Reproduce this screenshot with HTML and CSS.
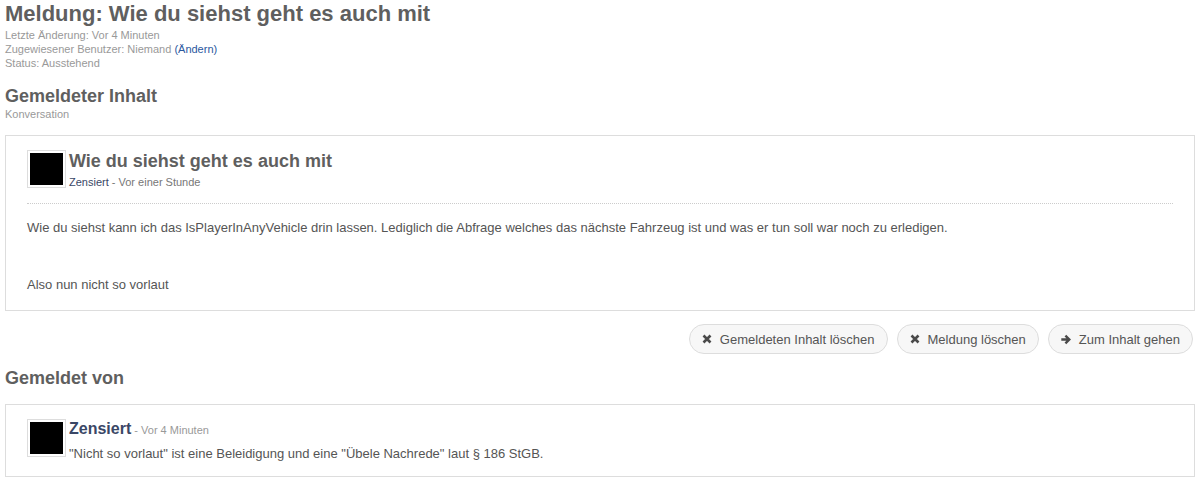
FILE: index.html
```html
<!DOCTYPE html>
<html lang="de">
<head>
<meta charset="utf-8">
<title>Meldung</title>
<link rel="stylesheet" href="styles.css">
</head>
<body>
<div class="page">
  <header class="report-head">
    <h1 class="title">Meldung: Wie du siehst geht es auch mit</h1>
    <ul class="meta">
      <li>Letzte Änderung: Vor 4 Minuten</li>
      <li>Zugewiesener Benutzer: Niemand <a class="link" href="#">(Ändern)</a></li>
      <li>Status: Ausstehend</li>
    </ul>
  </header>

  <section class="section">
    <h2 class="section-title">Gemeldeter Inhalt</h2>
    <p class="section-sub">Konversation</p>
    <div class="box content-box">
      <div class="msg-head">
        <div class="avatar"><div class="avatar-img"></div></div>
        <div class="msg-head-text">
          <h3 class="msg-title">Wie du siehst geht es auch mit</h3>
          <p class="msg-meta"><a class="user" href="#">Zensiert</a> - Vor einer Stunde</p>
        </div>
      </div>
      <div class="msg-body">
        <p>Wie du siehst kann ich das IsPlayerInAnyVehicle drin lassen. Lediglich die Abfrage welches das nächste Fahrzeug ist und was er tun soll war noch zu erledigen.</p>
        <p class="spacer">&nbsp;</p>
        <p>Also nun nicht so vorlaut</p>
      </div>
    </div>
    <div class="actions">
      <button class="btn" type="button">
        <svg class="icon" viewBox="0 0 10 10" width="10" height="10"><path d="M1.5 1.5 8.5 8.5M8.5 1.5 1.5 8.5" stroke="#4a4a4a" stroke-width="2.6" fill="none"/></svg>
        Gemeldeten Inhalt löschen
      </button>
      <button class="btn" type="button">
        <svg class="icon" viewBox="0 0 10 10" width="10" height="10"><path d="M1.5 1.5 8.5 8.5M8.5 1.5 1.5 8.5" stroke="#4a4a4a" stroke-width="2.6" fill="none"/></svg>
        Meldung löschen
      </button>
      <button class="btn" type="button">
        <svg class="icon" viewBox="0 0 10 11" width="10" height="11"><path d="M0.3 5.5H7.8M4.4 1.6 8.3 5.5 4.4 9.4" stroke="#4a4a4a" stroke-width="2.4" fill="none" stroke-linejoin="miter"/></svg>
        Zum Inhalt gehen
      </button>
    </div>
  </section>

  <section class="section">
    <h2 class="section-title reporter-title">Gemeldet von</h2>
    <div class="box reporter-box">
      <div class="avatar"><div class="avatar-img"></div></div>
      <div class="reporter-text">
        <p class="reporter-head"><a class="user user-big" href="#">Zensiert</a> <span class="time">- Vor 4 Minuten</span></p>
        <p class="reporter-msg">"Nicht so vorlaut" ist eine Beleidigung und eine "Übele Nachrede" laut § 186 StGB.</p>
      </div>
    </div>
  </section>
</div>
</body>
</html>
```

FILE: styles.css
```css
* { box-sizing: border-box; }
html, body { margin: 0; padding: 0; background: #fff; }
body {
  font-family: "Liberation Sans", Arial, sans-serif;
  color: #555;
  font-size: 13px;
}
p, h1, h2, h3, ul { margin: 0; padding: 0; }
ul { list-style: none; }
a { text-decoration: none; }

.page { padding: 0 7px 0 5px; }

.title {
  font-size: 22px;
  line-height: 28px;
  font-weight: bold;
  color: #5f5f5f;
}
.meta {
  font-size: 11px;
  line-height: 14px;
  color: #999;
}
.link { color: #2a579e; }

.section { display: flex; flex-direction: column; }
.section-title {
  font-size: 18px;
  line-height: 22px;
  font-weight: bold;
  color: #5f5f5f;
  margin-top: 15px;
}
.section-sub {
  font-size: 11px;
  line-height: 14px;
  color: #999;
  margin-top: 0;
}

.box {
  border: 1px solid #ddd;
  background: #fff;
}
.content-box {
  margin-top: 14px;
  padding: 14px 21px 16px 21px;
}
.msg-head {
  display: flex;
  gap: 3px;
  padding-bottom: 14px;
  border-bottom: 1px dotted #ccc;
}
.avatar {
  width: 39px;
  height: 38px;
  border: 1px solid #ddd;
  padding: 2px;
  background: #fff;
  flex: none;
}
.avatar-img { width: 100%; height: 100%; background: #000; }
.msg-head-text { display: flex; flex-direction: column; }
.msg-title {
  font-size: 18px;
  line-height: 22px;
  font-weight: bold;
  color: #5f5f5f;
}
.msg-meta {
  font-size: 11px;
  line-height: 14px;
  color: #777;
  margin-top: 3px;
}
.user { color: #3a4766; }
.msg-body {
  padding-top: 14px;
  line-height: 19px;
  color: #555;
}
.spacer { height: 38px; }

.actions {
  display: flex;
  justify-content: flex-end;
  gap: 9px;
  margin-top: 13px;
  padding-right: 2px;
}
.btn {
  display: flex;
  align-items: center;
  gap: 8px;
  height: 30px;
  padding: 0 12px 0 12px;
  border: 1px solid #ddd;
  border-radius: 15px;
  background: #f7f7f7;
  color: #555;
  font-family: "Liberation Sans", Arial, sans-serif;
  font-size: 13px;
}
.icon { flex: none; }

.reporter-title { margin-top: 13px; }
.reporter-box {
  margin-top: 15px;
  padding: 14px 21px 14px 21px;
  display: flex;
  gap: 3px;
}
.reporter-text { display: flex; flex-direction: column; }
.reporter-head { line-height: 20px; color: #999; font-size: 11px; }
.user-big { font-size: 16px; font-weight: bold; }
.reporter-msg { margin-top: 6px; line-height: 16px; }
```
